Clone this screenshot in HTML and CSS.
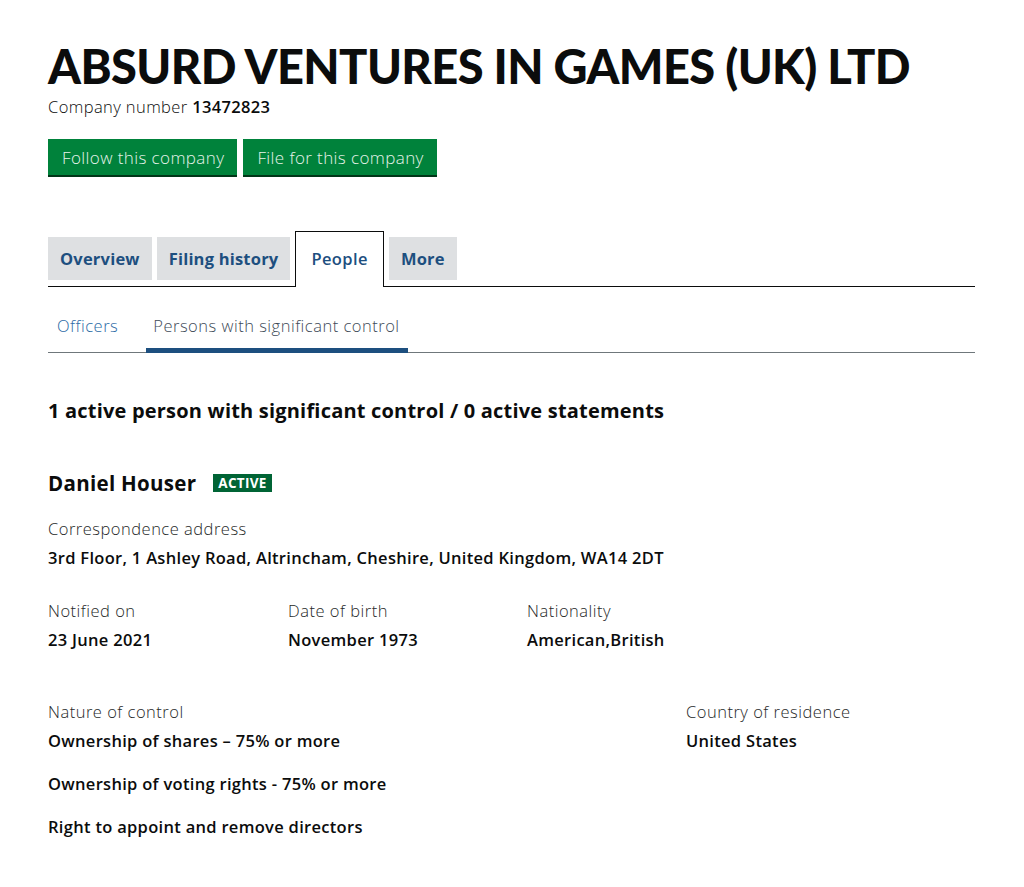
FILE: index.html
```html
<!DOCTYPE html>
<html lang="en">
<head>
<meta charset="utf-8">
<title>ABSURD VENTURES IN GAMES (UK) LTD</title>
<link rel="stylesheet" href="styles.css">
</head>
<body>
<main class="page">
  <h1 class="company-name">ABSURD VENTURES IN GAMES (UK) LTD</h1>
  <p class="company-number">Company number <strong>13472823</strong></p>
  <div class="actions">
    <a class="button" href="#">Follow this company</a>
    <a class="button" href="#">File for this company</a>
  </div>

  <nav class="tabs">
    <a class="tab" href="#">Overview</a>
    <a class="tab" href="#">Filing history</a>
    <a class="tab tab-active" href="#">People</a>
    <a class="tab" href="#">More</a>
  </nav>

  <nav class="subtabs">
    <a class="subtab" href="#">Officers</a>
    <a class="subtab subtab-active" href="#">Persons with significant control</a>
  </nav>

  <h2 class="summary">1 active person with significant control / 0 active statements</h2>

  <section class="person">
    <h3 class="person-name">Daniel Houser <span class="badge">ACTIVE</span></h3>
    <dl class="field address">
      <dt>Correspondence address</dt>
      <dd>3rd Floor, 1 Ashley Road, Altrincham, Cheshire, United Kingdom, WA14 2DT</dd>
    </dl>
    <div class="row three">
      <dl class="field">
        <dt>Notified on</dt>
        <dd>23 June 2021</dd>
      </dl>
      <dl class="field">
        <dt>Date of birth</dt>
        <dd>November 1973</dd>
      </dl>
      <dl class="field">
        <dt>Nationality</dt>
        <dd>American,British</dd>
      </dl>
    </div>
    <div class="row two">
      <dl class="field">
        <dt>Nature of control</dt>
        <dd>Ownership of shares – 75% or more</dd>
        <dd>Ownership of voting rights - 75% or more</dd>
        <dd>Right to appoint and remove directors</dd>
      </dl>
      <dl class="field">
        <dt>Country of residence</dt>
        <dd>United States</dd>
      </dl>
    </div>
  </section>
</main>
</body>
</html>
```

FILE: styles.css
```css
* { box-sizing: border-box; }
body {
  margin: 0;
  background: #ffffff;
  color: #0b0c0c;
  font-family: "Open Sans", "Liberation Sans", sans-serif;
}
.page {
  padding: 40px 49px 40px 48px;
}
.company-name {
  margin: 0;
  font-family: "Lato", "Open Sans", sans-serif;
  font-size: 47px;
  line-height: 52px;
  font-weight: 900;
  letter-spacing: -0.6px;
}
.company-number {
  margin: 4px 0 0;
  font-size: 16.5px;
  line-height: 22px;
  font-weight: 300;
  letter-spacing: 0.4px;
}
.company-number strong { font-weight: 600; letter-spacing: 0.3px; }
.actions {
  display: flex;
  gap: 6px;
  margin-top: 21px;
}
.button {
  display: block;
  background: #00823b;
  color: #e6f3ea;
  text-decoration: none;
  font-size: 17px;
  font-weight: 300;
  line-height: 20px;
  letter-spacing: 0.4px;
  padding: 9px 13px 7px 14px;
  box-shadow: 0 2px 0 #003618;
}
.tabs {
  display: flex;
  align-items: flex-end;
  gap: 5px;
  margin-top: 56px;
  border-bottom: 1px solid #0b0c0c;
}
.tab {
  display: block;
  background: #dee0e2;
  color: #1d4f7f;
  text-decoration: none;
  font-size: 16.5px;
  font-weight: 700;
  line-height: 20px;
  letter-spacing: 0.2px;
  padding: 12px 12px 11px;
  margin-bottom: 6px;
}
.tab-active {
  background: #ffffff;
  border: 1px solid #0b0c0c;
  border-bottom: 0;
  padding: 17px 15px 18px;
  margin-bottom: -1px;
  color: #1d4f7f;
  font-weight: 600;
  letter-spacing: 0.4px;
}
.subtabs {
  display: flex;
  border-bottom: 1px solid #6f777b;
}
.subtab {
  display: block;
  color: #2b6aa5;
  text-decoration: none;
  font-size: 16.5px;
  font-weight: 300;
  line-height: 20px;
  letter-spacing: 0.5px;
  padding: 29px 8px 12px 9px;
  border-bottom: 5px solid transparent;
  margin-bottom: -1px;
}
.subtab-active {
  color: #3d4a57;
  border-bottom-color: #1d4f7f;
  margin-left: 20px;
  padding-left: 7px;
}
.summary {
  margin: 45px 0 0;
  font-size: 20px;
  line-height: 26px;
  font-weight: 700;
  letter-spacing: 0.2px;
}
.person { margin-top: 46px; }
.person-name {
  margin: 0;
  font-size: 20.5px;
  line-height: 26px;
  font-weight: 700;
  letter-spacing: 0.3px;
  display: flex;
  align-items: center;
  gap: 17px;
}
.badge {
  display: inline-block;
  background: #006435;
  color: #ffffff;
  font-size: 13.5px;
  line-height: 18px;
  font-weight: 700;
  padding: 0 5px;
  letter-spacing: 0.3px;
}
.field {
  margin: 0;
}
.field dt {
  font-size: 16.5px;
  line-height: 22px;
  font-weight: 300;
  letter-spacing: 0.5px;
  color: #262828;
}
.field dd {
  margin: 7px 0 0;
  font-size: 16.5px;
  line-height: 22px;
  font-weight: 600;
  letter-spacing: 0.3px;
}
.field dd + dd { margin-top: 21px; }
.field.address { margin-top: 22px; }
.row {
  display: grid;
}
.row.three {
  grid-template-columns: 240px 239px 240px;
  margin-top: 31px;
}
.row.two {
  grid-template-columns: 638px 240px;
  margin-top: 50px;
}
```
